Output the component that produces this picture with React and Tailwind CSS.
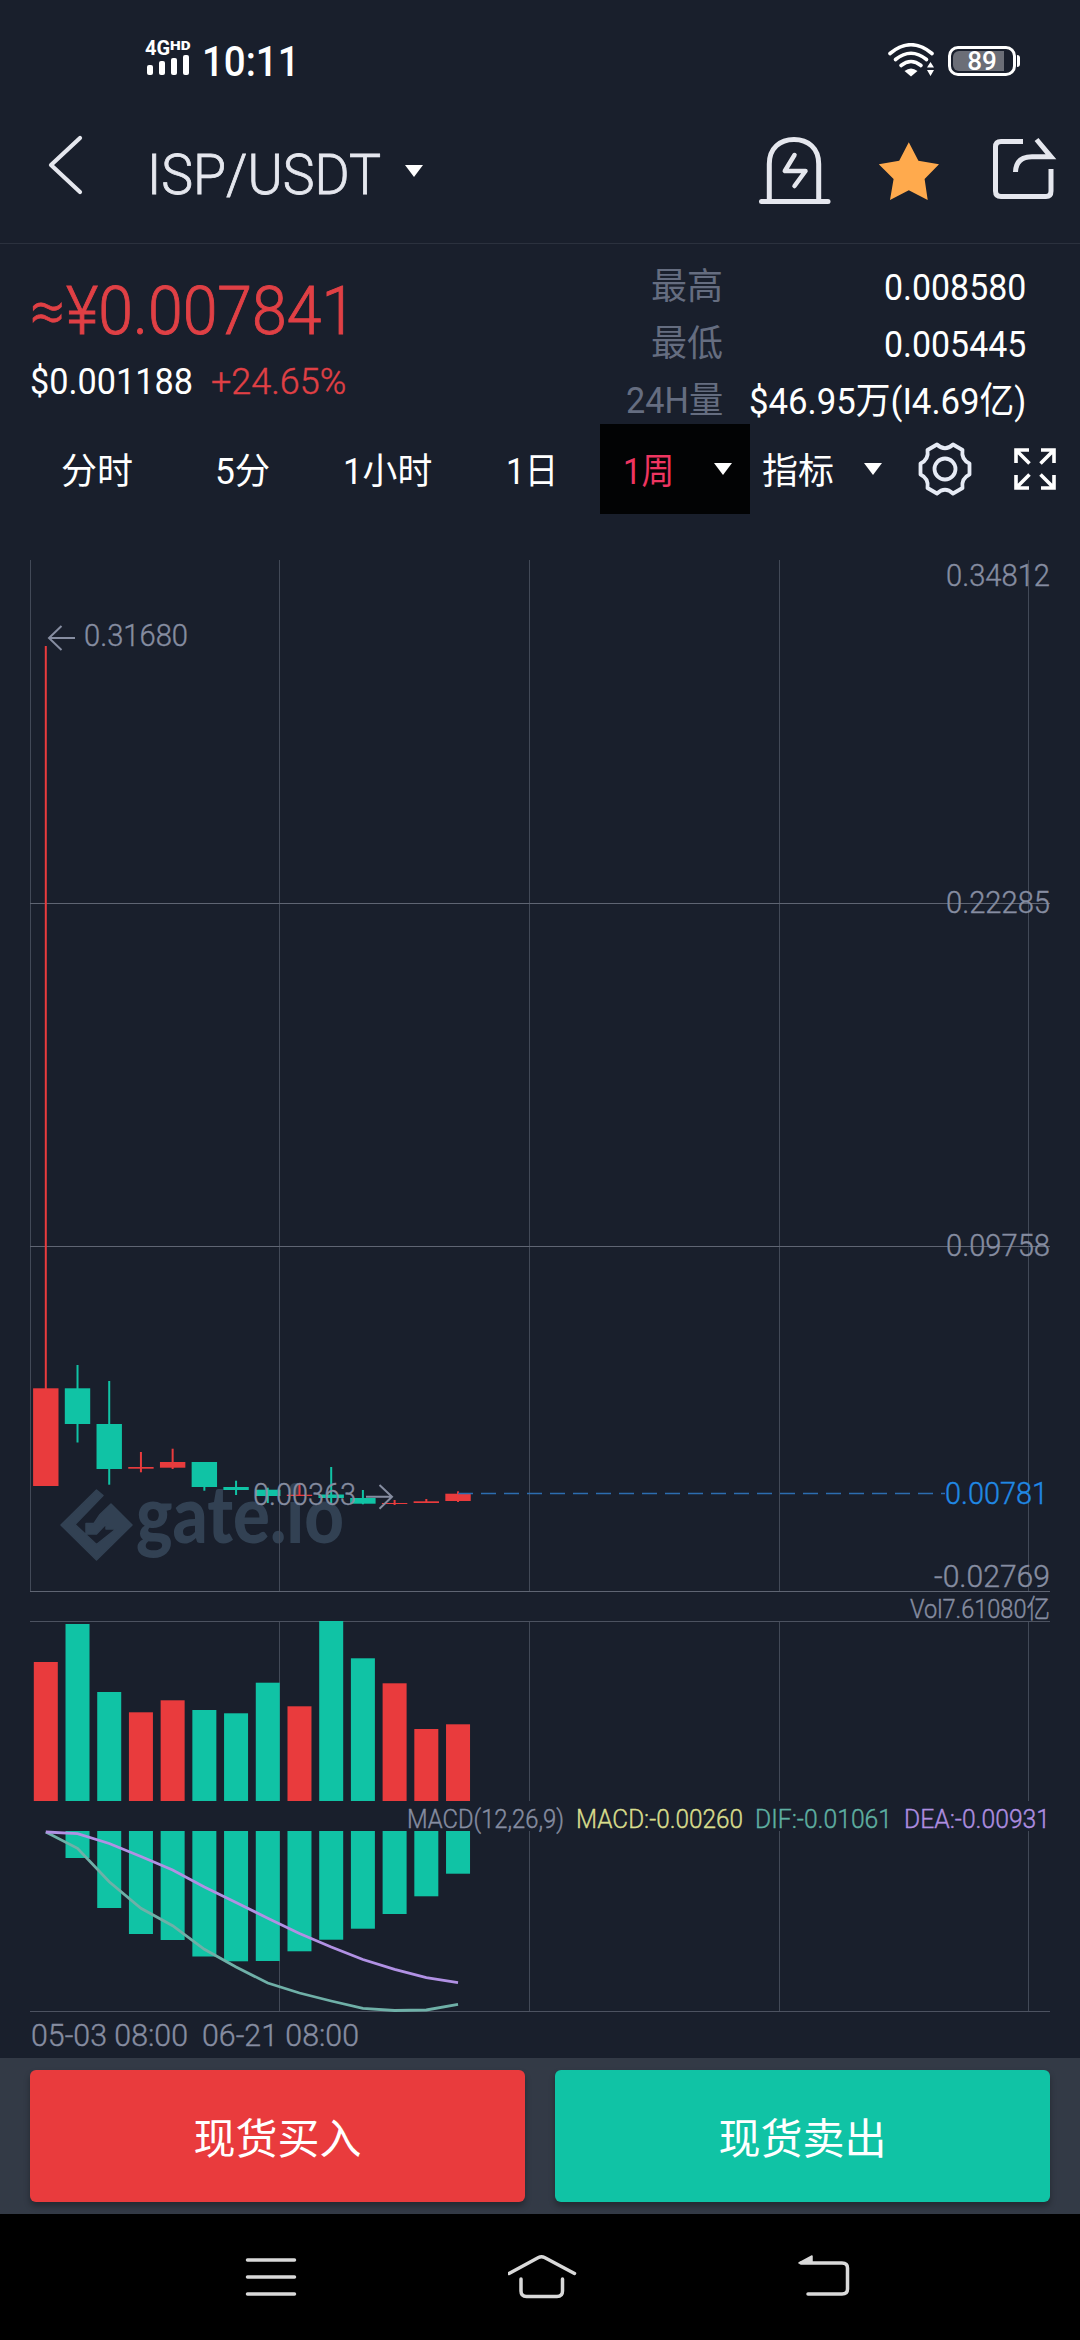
import { useLayoutEffect, useRef } from "react";

const RED = "#e93b3d";
const GREEN = "#10c3a5";
const FONT = 'Roboto, "Noto Sans CJK SC", sans-serif';

/* Condenses a line of text so that it spans exactly `w` pixels. */
function Fit({ w, className = "", children }) {
  const ref = useRef(null);
  useLayoutEffect(() => {
    const el = ref.current;
    const apply = () => {
      el.style.transform = `scaleX(${w / el.offsetWidth})`;
    };
    apply();
    document.fonts?.ready.then(apply);
  }, [w]);
  return (
    <span className="block shrink-0" style={{ width: w }}>
      <span ref={ref} className={`block w-max origin-left whitespace-nowrap ${className}`}>
        {children}
      </span>
    </span>
  );
}

function Caret({ className = "" }) {
  return (
    <svg className={`shrink-0 ${className}`} width="18" height="12" viewBox="0 0 18 12">
      <path d="M0 0H18L9 12Z" fill="#fff" />
    </svg>
  );
}

function StatusBar() {
  return (
    <div className="flex h-[120px] items-start justify-between pl-[145px] pr-[60px] text-white">
      <div className="flex pt-[40px]">
        <div className="w-[48px]">
          <div className="flex h-[15px] items-start leading-none">
            <Fit w={25} className="text-[20px] font-bold leading-[16px]">4G</Fit>
            <Fit w={21} className="text-[13px] font-black leading-[11px]">HD</Fit>
          </div>
          <div className="flex h-[20px] items-end gap-[6px] pl-[2px]">
            <div className="h-[10px] w-[6px] rounded-[2px] bg-white" />
            <div className="h-[14px] w-[6px] rounded-[2px] bg-white" />
            <div className="h-[17px] w-[6px] rounded-[2px] bg-white" />
            <div className="h-[20px] w-[6px] rounded-[2px] bg-white" />
          </div>
        </div>
        <div className="ml-[9px]">
          <Fit w={98} className="text-[42px] font-medium leading-[44px]">10:11</Fit>
        </div>
      </div>
      <div className="flex pt-[43px]">
        <svg width="48" height="34" viewBox="887 43 48 34" fill="none" stroke="#fff" strokeWidth="3.600" strokeLinecap="round">
          <path d="M890 53.500Q911 36 932 53.500" />
          <path d="M895.500 59.500Q911 47 926.500 59.500" />
          <path d="M901 65.500Q911 57.500 921 65.500" />
          <path d="M904.500 71Q911 66 917.500 71L911 76.500Z" fill="#fff" stroke="none" />
          <path d="M927 67.500h7l-3.500-5.500ZM927 70h7l-3.500 6Z" fill="#fff" stroke="none" />
        </svg>
        <div className="ml-[13px] mt-[2px] flex items-center">
          <div className="relative h-[30px] w-[68px] rounded-[10px] border-[3px] border-white p-[2px]">
            <div className="h-[20px] w-[51px] rounded-l-[6px] bg-[#6b6e77]" />
            <div className="absolute inset-0 flex items-center justify-center text-[26px] font-medium leading-none">89</div>
          </div>
          <div className="ml-px h-[12px] w-[3px] rounded-r-[3px] bg-white" />
        </div>
      </div>
    </div>
  );
}

function Header() {
  return (
    <div className="flex h-[124px] items-start border-b border-[#2b313e] text-[#e5e7ee]">
      <svg className="ml-[46px] mt-[13px]" width="40" height="64" viewBox="46 133 40 64" fill="none" stroke="#e5e7ee" strokeWidth="4.200" strokeLinecap="round" strokeLinejoin="round">
        <path d="M80 138L51 165L80 192" />
      </svg>
      <div className="ml-[61px] mt-[23px]">
        <Fit w={234} className="text-[55px] font-light leading-[64px] [-webkit-text-stroke:0.8px_currentColor]">ISP/USDT</Fit>
      </div>
      <Caret className="ml-[24px] mt-[45px]" />
      <svg className="ml-auto mr-[22px]" width="302" height="100" viewBox="756 120 302 100" fill="none" stroke="#e5e7ee" strokeWidth="5">
        <path d="M761.500 201.500H828" strokeLinecap="round" />
        <path d="M769.300 201V164C769.300 148 780 139.500 794 139.500S818.700 148 818.700 164V201" />
        <path d="M794.500 155L784.800 171H805.500L794.500 186" strokeWidth="4.500" strokeLinecap="round" strokeLinejoin="round" />
        <path d="M908.800 142.300L918.400 160.700L939 164.300L924.600 179L927.700 200L908.800 190.300L890 200L893.600 179L878.800 164.300L899.200 160.700Z" fill="#ffaa4d" stroke="none" />
        <path d="M1023 141.500H1001Q995.500 141.500 995.500 147V191Q995.500 196.500 1001 196.500H1046Q1051 196.500 1051 191V169" />
        <path d="M1036.500 139.500L1051 156.800H1032Q1016 156.800 1015.500 172" />
      </svg>
    </div>
  );
}

function Stat({ label, lw, value, vw }) {
  return (
    <div className="flex h-[57px] items-center justify-end">
      <Fit w={lw} className="text-[36px] leading-[57px] text-[#656d80]">{label}</Fit>
      <div className="flex w-[303px] justify-end">
        <Fit w={vw} className="text-[37px] leading-[57px]">{value}</Fit>
      </div>
    </div>
  );
}

function Summary() {
  return (
    <div className="flex h-[180px] justify-between pl-[30px] pr-[54px] text-white">
      <div className="pt-[29px]">
        <div className="flex text-[#e04045]">
          <Fit w={35} className="text-[60px] font-light leading-[78px] [-webkit-text-stroke:0.8px_currentColor]">≈</Fit>
          <div className="ml-px">
            <Fit w={290} className="text-[66px] font-light leading-[78px] [-webkit-text-stroke:0.9px_currentColor]">¥0.007841</Fit>
          </div>
        </div>
        <div className="mt-[9px] flex gap-[18px]">
          <Fit w={163} className="text-[37px] leading-[44px]">$0.001188</Fit>
          <Fit w={135} className="text-[37px] font-light leading-[44px] text-[#e04045] [-webkit-text-stroke:0.4px_currentColor]">+24.65%</Fit>
        </div>
      </div>
      <div className="pt-[15px]">
        <Stat label="最高" lw={72} value="0.008580" vw={142} />
        <Stat label="最低" lw={72} value="0.005445" vw={142} />
        <Stat label="24H量" lw={97} value="$46.95万(I4.69亿)" vw={277} />
      </div>
    </div>
  );
}

function Tabs() {
  return (
    <div className="flex h-[90px] items-center text-[36px] leading-none text-white">
      <div className="w-[154px] pl-[61px] pt-[6px]"><Fit w={72}>分时</Fit></div>
      <div className="w-[130px] pl-[61px] pt-[6px]"><Fit w={55}>5分</Fit></div>
      <div className="w-[161px] pl-[59px] pt-[6px]"><Fit w={89}>1小时</Fit></div>
      <div className="w-[155px] pl-[61px] pt-[6px]"><Fit w={52}>1日</Fit></div>
      <div className="flex h-[90px] w-[150px] items-center bg-[#020304] pl-[23px] text-[#ee3560]">
        <div className="pt-[6px]"><Fit w={51}>1周</Fit></div>
        <Caret className="ml-[40px]" />
      </div>
      <div className="ml-[12px] pt-[6px]"><Fit w={72}>指标</Fit></div>
      <Caret className="ml-[30px]" />
      <svg className="ml-[34px]" width="58" height="58" viewBox="-29 -29 58 58" fill="none" stroke="#e6ebf5" strokeWidth="3.800" strokeLinejoin="round">
        <circle r="10.500" />
        <path d="M-8 -24.500Q0 -17 8 -24.500L17.500 -19Q16 -9.500 24.500 -5.500V5.500Q16 9.500 17.500 19L8 24.500Q0 17 -8 24.500L-17.500 19Q-16 9.500 -24.500 5.500V-5.500Q-16 -9.500 -17.500 -19Z" />
      </svg>
      <svg className="ml-[40px]" width="42" height="42" viewBox="0 0 42 42" fill="none" stroke="#fff" strokeWidth="3.600">
        <path d="M15 2H2V15M2 2L15.500 15.500M27 2H40V15M40 2L26.500 15.500M15 40H2V27M2 40L15.500 26.500M27 40H40V27M40 40L26.500 26.500" />
      </svg>
    </div>
  );
}

const cx = (i) => 45.8 + 31.71 * i;

/* [colour, high, low, bodyTop, bodyBottom] in chart pixels */
const candles = [
  [RED, 646, 1486, 1388.3, 1486],
  [GREEN, 1365, 1442.5, 1388.3, 1424],
  [GREEN, 1381, 1484.7, 1424, 1469],
  [RED, 1452, 1472.3, 1467, 1468.7],
  [RED, 1448.7, 1469, 1462, 1467.7],
  [GREEN, 1462, 1490.7, 1462, 1487],
  [GREEN, 1480.7, 1495, 1487, 1490],
  [GREEN, 1487.7, 1503, 1489.7, 1496],
  [RED, 1483.7, 1496, 1494.7, 1496],
  [GREEN, 1467, 1503, 1494.5, 1498],
  [GREEN, 1490, 1504.3, 1498, 1503.7],
  [RED, 1500, 1505, 1503, 1504],
  [RED, 1499, 1503, 1501.3, 1503],
  [RED, 1491.3, 1502, 1493.7, 1501],
];
const volumes = [1662, 1624, 1692, 1712.3, 1700.3, 1710, 1713.3, 1682.7, 1706.3, 1621, 1658.3, 1683.3, 1729, 1724.3];
const hist = [1831, 1858, 1908, 1934, 1940, 1956.5, 1961.3, 1961, 1951.3, 1939.7, 1928.7, 1914, 1896.3, 1873.7];
const dea = [1832, 1833.7, 1843.5, 1856.5, 1870, 1887, 1902.5, 1918.3, 1933.5, 1947, 1959.5, 1969.3, 1977.7, 1982.7];
const dif = [1832, 1848.3, 1881.7, 1908.3, 1925.7, 1949.3, 1967, 1983, 1993, 2001, 2008.3, 2010.5, 2010, 2004.3];
const columns = [279.5, 529.5, 779.5, 1028.5];
const toLine = (ys) => ys.map((y, i) => `${cx(i)},${y}`).join(" ");

function Label({ x, y, w, size = 31, fill = "#868da1", children }) {
  return (
    <text x={x} y={y} fontSize={size} fill={fill} stroke={fill} strokeWidth="0.400" textLength={w} lengthAdjust="spacingAndGlyphs">
      {children}
    </text>
  );
}

function Chart() {
  return (
    <svg className="block shrink-0" width="1080" height="1544" viewBox="0 514 1080 1544" fontFamily={FONT} fontWeight="300">
      <g fill="#324153">
        <path d="M96.500 1490L61 1525L96.500 1560L132 1525L111 1504L100 1514.500L94 1523.500H86V1534H96.500L106 1524V1529H116L96.500 1544.500L75 1524.500L103 1495.500Z" stroke="#324153" strokeWidth="1.500" strokeLinejoin="round" />
        <text x="136" y="1543" fontSize="80" fontFamily="Lato, sans-serif" fontWeight="900" textLength="208" lengthAdjust="spacingAndGlyphs">gate.io</text>
      </g>
      <g stroke="#424957" strokeWidth="1">
        <path d="M30.500 560V1591" />
        {columns.map((x) => (
          <path key={x} d={`M${x} 560V1591M${x} 1621V1801M${x} 1831V2011`} />
        ))}
        <path d="M30 903.500H1050M30 1246.500H1050M30 1591.500H1050" stroke="#5f6573" />
        <path d="M30 1621.500H1050M30 2011.500H1050" stroke="#4c5260" />
      </g>
      {candles.map(([c, hi, lo, top, bot], i) => (
        <g key={i} fill={c}>
          <rect x={cx(i) - 1} y={hi} width="2" height={lo - hi} />
          <rect x={cx(i) - 12.7} y={top} width="25.400" height={bot - top} />
        </g>
      ))}
      <path d="M458 1493.500H945" stroke="#2c6db0" strokeWidth="1.400" strokeDasharray="15 8" />
      {volumes.map((y, i) => (
        <rect key={i} x={cx(i) - 12} y={y} width="24" height={1801 - y} fill={candles[i][0]} />
      ))}
      {hist.map((y, i) => (
        <rect key={i} x={cx(i) - 12} y="1831" width="24" height={y - 1831} fill={GREEN} />
      ))}
      <g fill="none" strokeWidth="2.800">
        <polyline points={toLine(dif)} stroke="#6fb0a8" />
        <polyline points={toLine(dea)} stroke="#b191e4" />
      </g>
      <g fill="none" stroke="#868da1" strokeWidth="2">
        <path d="M75 638H49M61.500 626L49 638L61.500 650" />
        <path d="M366 1496.700H392M379.500 1485L392 1496.700L379.500 1508.700" />
      </g>
      <Label x={84} y={646} w={104}>0.31680</Label>
      <Label x={253} y={1505} w={103}>0.00363</Label>
      <Label x={946} y={586} w={104}>0.34812</Label>
      <Label x={946} y={913} w={104}>0.22285</Label>
      <Label x={946} y={1256} w={104}>0.09758</Label>
      <Label x={945} y={1504} w={103} fill="#2089e5">0.00781</Label>
      <Label x={934} y={1587} w={116}>-0.02769</Label>
      <Label x={910} y={1618} w={140} size={26}>Vol7.61080亿</Label>
      <Label x={407} y={1828} w={157} size={26}>MACD(12,26,9)</Label>
      <Label x={576} y={1828} w={167} size={26} fill="#d8dd8c">MACD:-0.00260</Label>
      <Label x={755} y={1828} w={137} size={26} fill="#5fb0a2">DIF:-0.01061</Label>
      <Label x={904} y={1828} w={146} size={26} fill="#ae8ee0">DEA:-0.00931</Label>
      <Label x={31} y={2046} w={157}>05-03 08:00</Label>
      <Label x={202} y={2046} w={157}>06-21 08:00</Label>
    </svg>
  );
}

function Actions() {
  return (
    <div className="flex h-[156px] gap-[30px] bg-[#333a46] px-[30px] pt-[12px] text-[42px] text-white">
      <button className="flex h-[132px] flex-1 items-center justify-center rounded-[6px] bg-[#e93b3d] pt-[6px] shadow-[0_4px_6px_rgba(0,0,0,0.3)]">现货买入</button>
      <button className="flex h-[132px] flex-1 items-center justify-center rounded-[6px] bg-[#10c3a5] pt-[6px] shadow-[0_4px_6px_rgba(0,0,0,0.3)]">现货卖出</button>
    </div>
  );
}

function NavBar() {
  return (
    <div className="flex h-[126px] items-center justify-between bg-black pl-[231px] pr-[216px]">
      <svg width="80" height="60" viewBox="231 2247 80 60" stroke="#d9d9d9" strokeWidth="3.500" strokeLinecap="round">
        <path d="M247.500 2260H294.500M247.500 2277H294.500M247.500 2294H294.500" />
      </svg>
      <svg width="80" height="60" viewBox="507.500 2247 80 60" fill="none" stroke="#d9d9d9" strokeWidth="3.500" strokeLinecap="round" strokeLinejoin="round">
        <path d="M508.500 2273.500L538 2257.500Q541 2256 544 2257.500L574 2273.500" />
        <path d="M520.500 2279V2291Q520.500 2296.500 526 2296.500H556.500Q562 2296.500 562 2291V2279" />
      </svg>
      <svg width="80" height="60" viewBox="784 2247 80 60" fill="none" stroke="#d9d9d9" strokeWidth="3.500" strokeLinecap="round" strokeLinejoin="round">
        <path d="M801 2263H842Q847.500 2263 847.500 2268V2289Q847.500 2294 842 2294H808" />
        <path d="M799 2263L812 2256V2263Z" fill="#d9d9d9" strokeWidth="1.500" />
      </svg>
    </div>
  );
}

export default function App() {
  return (
    <div className="flex h-[2340px] w-[1080px] flex-col overflow-hidden bg-[#191f2c] font-[Roboto,'Noto_Sans_CJK_SC',sans-serif]">
      <StatusBar />
      <Header />
      <Summary />
      <Tabs />
      <Chart />
      <Actions />
      <NavBar />
    </div>
  );
}
